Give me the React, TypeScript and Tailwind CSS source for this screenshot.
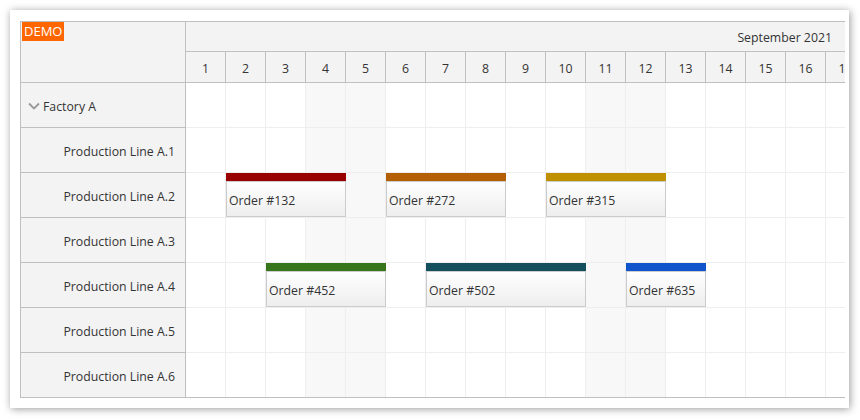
import React from "react";

const days = Array.from({ length: 17 }, (_, i) => i + 1);
const weekend = new Set([4, 5, 11, 12, 18, 19, 25, 26]);

type Ev = { text: string; start: number; len: number; color: string };
const rows: { name: string; parent?: boolean; events: Ev[] }[] = [
  { name: "Factory A", parent: true, events: [] },
  { name: "Production Line A.1", events: [] },
  {
    name: "Production Line A.2",
    events: [
      { text: "Order #132", start: 2, len: 3, color: "#990000" },
      { text: "Order #272", start: 6, len: 3, color: "#b45f06" },
      { text: "Order #315", start: 10, len: 3, color: "#bf9000" },
    ],
  },
  { name: "Production Line A.3", events: [] },
  {
    name: "Production Line A.4",
    events: [
      { text: "Order #452", start: 3, len: 3, color: "#38761d" },
      { text: "Order #502", start: 7, len: 4, color: "#134f5c" },
      { text: "Order #635", start: 12, len: 2, color: "#1155cc" },
    ],
  },
  { name: "Production Line A.5", events: [] },
  { name: "Production Line A.6", events: [] },
];

const font = { fontFamily: '"Open Sans", "Noto Sans", sans-serif' };

export default function App() {
  return (
    <div className="bg-white w-[860px] h-[420px] p-[10px]" style={font}>
      <div className="w-[839px] h-[398px] bg-white shadow-[1px_1px_8px_rgba(0,0,0,0.4)] pt-[11px] pl-[10px]">
        <div className="w-[825px] flex border-l border-t border-b border-[#c0c0c0] text-[12.3px] text-[#333] overflow-hidden">
          {/* left column */}
          <div className="w-[165px] shrink-0 border-r border-[#c0c0c0] bg-[#f3f3f3]">
            <div className="h-[61px] border-b border-[#c0c0c0] relative">
              <div className="absolute left-[1px] top-0 bg-[#ff6600] text-white text-[13px] leading-[19px] px-[2px]">
                DEMO
              </div>
            </div>
            {rows.map((r, i) => (
              <div
                key={r.name}
                className={`flex items-center pt-[4px] ${i < rows.length - 1 ? "h-[45px] border-b border-[#c0c0c0]" : "h-[44px]"} ${r.parent ? "pl-[7px]" : "justify-end pr-[10px]"}`}
              >
                {r.parent && (
                  <svg width="12" height="12" viewBox="0 0 12 12" className="mr-[3px] -mt-[3px]">
                    <polyline points="1,3.5 6,8.5 11,3.5" fill="none" stroke="#999" strokeWidth="1.8" />
                  </svg>
                )}
                <span>{r.name}</span>
              </div>
            ))}
          </div>
          {/* grid */}
          <div className="flex-1 overflow-hidden">
            <div className="w-[700px]">
              <div className="h-[30px] bg-[#f3f3f3] border-b border-[#c0c0c0] w-[659px] flex items-center justify-end pr-[13px] pt-[4px]">
                <span>September 2021</span>
              </div>
              <div className="h-[31px] flex border-b border-[#c0c0c0] bg-[#f3f3f3]">
                {days.map((d) => (
                  <div key={d} className="w-[40px] shrink-0 border-r border-[#c0c0c0] flex items-center justify-center pt-[4px]">
                    {d}
                  </div>
                ))}
              </div>
              {rows.map((r, i) => (
                <div
                  key={r.name}
                  className={`flex relative ${i < rows.length - 1 ? "h-[45px] border-b border-[#eeeeee]" : "h-[44px]"}`}
                >
                  {days.map((d) => (
                    <div
                      key={d}
                      className={`w-[40px] shrink-0 border-r border-[#eeeeee] ${weekend.has(d) ? "bg-[#f8f8f8]" : "bg-white"}`}
                    />
                  ))}
                  {r.events.map((e) => (
                    <div
                      key={e.text}
                      className="absolute top-0 h-[44px] flex flex-col"
                      style={{ left: (e.start - 1) * 40, width: e.len * 40 }}
                    >
                      <div className="h-[8px]" style={{ background: e.color }} />
                      <div className="flex-1 border border-[#cccccc] bg-gradient-to-b from-white to-[#eeeeee] flex items-center pl-[2px] pt-[4px]">
                        {e.text}
                      </div>
                    </div>
                  ))}
                </div>
              ))}
            </div>
          </div>
        </div>
      </div>
    </div>
  );
}
